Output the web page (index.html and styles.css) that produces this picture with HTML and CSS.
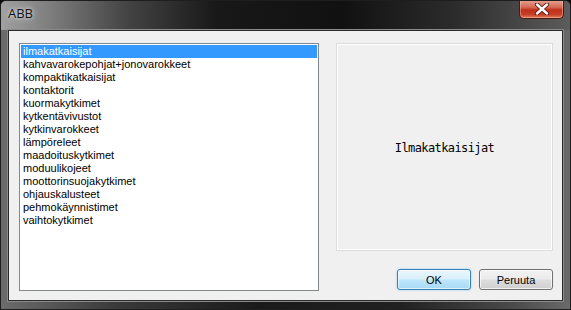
FILE: index.html
```html
<!DOCTYPE html>
<html lang="fi">
<head>
  <meta charset="UTF-8" />
  <title>ABB</title>
  <link rel="stylesheet" href="styles.css">
</head>
<body>
  <div class="window">
    <div class="titlebar">
      <span class="title">ABB</span>
      <div class="close">
        <svg width="16" height="12" viewBox="0 0 16 12">
          <path d="M3 1.5 L13 10.5 M13 1.5 L3 10.5" stroke="#5a1608" stroke-width="4.2" stroke-linecap="round" />
          <path d="M3 1.5 L13 10.5 M13 1.5 L3 10.5" stroke="#ffffff" stroke-width="2.4" stroke-linecap="round" />
        </svg>
      </div>
    </div>

    <div class="client">
      <ul class="list">
        <li class="selected">ilmakatkaisijat</li>
        <li>kahvavarokepohjat+jonovarokkeet</li>
        <li>kompaktikatkaisijat</li>
        <li>kontaktorit</li>
        <li>kuormakytkimet</li>
        <li>kytkentävivustot</li>
        <li>kytkinvarokkeet</li>
        <li>lämpöreleet</li>
        <li>maadoituskytkimet</li>
        <li>moduulikojeet</li>
        <li>moottorinsuojakytkimet</li>
        <li>ohjauskalusteet</li>
        <li>pehmokäynnistimet</li>
        <li>vaihtokytkimet</li>
      </ul>

      <div class="side">
        <div class="preview">
          <span class="preview-text">Ilmakatkaisijat</span>
        </div>
        <div class="buttons">
          <button class="btn btn-default">OK</button>
          <button class="btn">Peruuta</button>
        </div>
      </div>
    </div>
  </div>
</body>
</html>
```

FILE: styles.css
```css
html, body {
  margin: 0;
  padding: 0;
  background: #0c0c0c;
}
.window {
  width: 571px;
  height: 310px;
  box-sizing: border-box;
  background: linear-gradient(90deg, #6c6c6c 0%, #3a3a3a 20%, #1a1a1a 45%, #202020 70%, #4a4a4a 90%, #6a6a6a 100%);
  border: 1px solid #1e1e1e;
  border-radius: 6px 6px 0 0;
  display: flex;
  flex-direction: column;
  overflow: hidden;
}
.titlebar {
  height: 29px;
  display: flex;
  align-items: flex-start;
  justify-content: space-between;
  background: linear-gradient(90deg, #a0a0a0 0%, #808080 8%, #444444 22%, #181818 38%, #111111 60%, #2c2c2c 80%, #5c5c5c 100%);
}
.title {
  font-family: "Open Sans", "DejaVu Sans", sans-serif;
  font-size: 13px;
  color: #111;
  margin: 3px 0 0 7px;
  padding: 0 6px 0 0;
  text-shadow: 0 0 6px #e0e0e0, 0 0 3px #d8d8d8;
}
.close {
  width: 45px;
  height: 19px;
  margin-right: 6px;
  margin-top: -1px;
  box-sizing: border-box;
  border: 1px solid #4a1a12;
  border-top: none;
  border-radius: 0 0 5px 5px;
  background: linear-gradient(180deg, #e6a596 0%, #d56a55 40%, #c0301a 55%, #c63e26 80%, #e07c5c 100%);
  box-shadow: inset 0 0 0 1px rgba(255, 200, 180, 0.45);
  display: flex;
  align-items: center;
  justify-content: center;
}
.client {
  margin: 0 7px 8px 7px;
  height: 271px;
  box-sizing: border-box;
  background: #f0f0f0;
  border: 1px solid #2a2a2a;
  box-shadow: 0 0 0 1px #8a8a8a;
  padding: 12px 9px 0 10px;
  display: flex;
  gap: 17px;
}
.list {
  list-style: none;
  margin: 0;
  padding: 1px;
  width: 300px;
  height: 248px;
  box-sizing: border-box;
  background: #fff;
  border: 1px solid #828790;
  font-family: "Liberation Sans", Arial, sans-serif;
  font-size: 11px;
  color: #000;
}
.list li {
  height: 13px;
  line-height: 13px;
  padding-left: 2px;
  white-space: nowrap;
}
.list li.selected {
  background: #3399ff;
  color: #fff;
}
.side {
  display: flex;
  flex-direction: column;
  width: 217px;
}
.preview {
  height: 208px;
  box-sizing: border-box;
  border: 1px solid #dcdcdc;
  box-shadow: inset 0 0 0 1px #ffffff;
  display: flex;
  align-items: center;
  justify-content: center;
}
.preview-text {
  font-family: "DejaVu Sans Mono", monospace;
  font-size: 12px;
  letter-spacing: -0.6px;
  color: #000;
  margin-top: 2px;
}
.buttons {
  display: flex;
  justify-content: flex-end;
  gap: 8px;
  margin-top: 18px;
}
.btn {
  width: 74px;
  height: 21px;
  padding: 0;
  box-sizing: border-box;
  font-family: "Liberation Sans", Arial, sans-serif;
  font-size: 11px;
  color: #000;
  border: 1px solid #707070;
  border-radius: 3px;
  background: linear-gradient(180deg, #f2f2f2 0%, #ebebeb 48%, #dddddd 52%, #cfcfcf 100%);
  box-shadow: inset 0 0 0 1px rgba(255, 255, 255, 0.7);
}
.btn-default {
  border-color: #3c7fb1;
  background: linear-gradient(180deg, #eaf6fd 0%, #d9f0fc 48%, #bee6fd 52%, #a7d9f5 100%);
  box-shadow: inset 0 0 0 1px rgba(255, 255, 255, 0.6), 0 0 2px #6fc3ee;
}
```
